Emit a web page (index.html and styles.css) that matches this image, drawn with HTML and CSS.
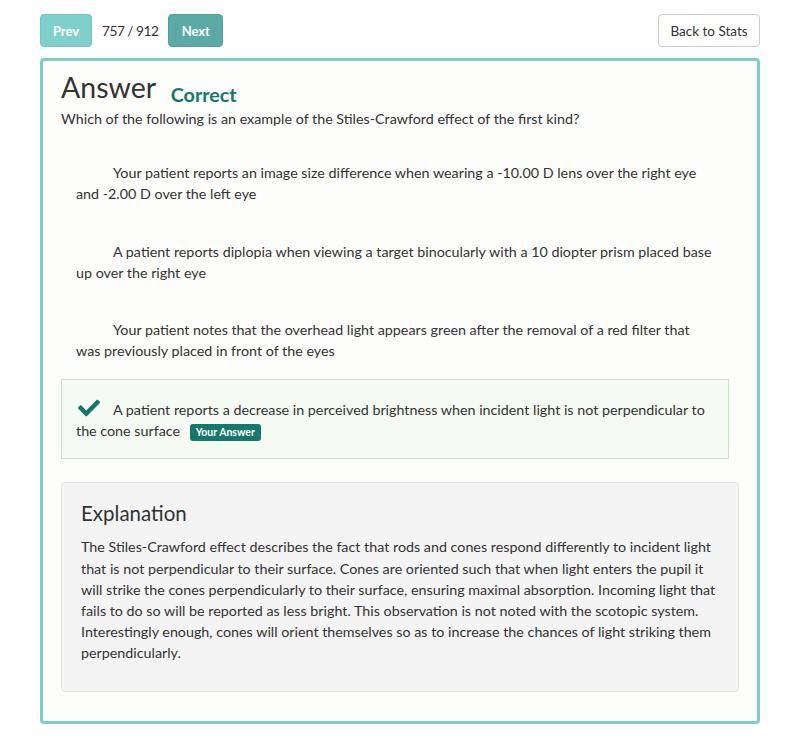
FILE: index.html
```html
<!DOCTYPE html>
<html>
<head>
<meta charset="utf-8">
<link rel="stylesheet" href="styles.css">
</head>
<body>
<div class="page">
  <div class="toolbar">
    <div class="pager">
      <button class="btn btn-prev">Prev</button>
      <span class="count">757 / 912</span>
      <button class="btn btn-next">Next</button>
    </div>
    <button class="btn-back">Back to Stats</button>
  </div>
  <div class="card">
    <h1 class="title">Answer <span class="status">Correct</span></h1>
    <p class="question">Which of the following is an example of the Stiles-Crawford effect of the first kind?</p>
    <ul class="options">
      <li class="option"><span class="mark"></span>Your patient reports an image size difference when wearing a -10.00 D lens over the right eye and -2.00 D over the left eye</li>
      <li class="option"><span class="mark"></span>A patient reports diplopia when viewing a target binocularly with a 10 diopter prism placed base up over the right eye</li>
      <li class="option"><span class="mark"></span>Your patient notes that the overhead light appears green after the removal of a red filter that was previously placed in front of the eyes</li>
      <li class="option selected"><span class="mark"><svg viewBox="0 0 512 512" width="22" height="22"><path fill="#17776a" d="M173.9 439.4l-166.4-166.4c-10-10-10-26.2 0-36.2l36.2-36.2c10-10 26.2-10 36.2 0L192 312.7 432.1 72.6c10-10 26.2-10 36.2 0l36.2 36.2c10 10 10 26.2 0 36.2l-294.4 294.4c-10 10-26.2 10-36.2 0z"/></svg></span><span class="opt-text">A patient reports a decrease in perceived brightness when incident light is not perpendicular to the cone surface</span> <span class="badge">Your Answer</span></li>
    </ul>
    <div class="explanation">
      <h2 class="exp-title">Explanation</h2>
      <p class="exp-text">The Stiles-Crawford effect describes the fact that rods and cones respond differently to incident light that is not perpendicular to their surface. Cones are oriented such that when light enters the pupil it will strike the cones perpendicularly to their surface, ensuring maximal absorption. Incoming light that fails to do so will be reported as less bright. This observation is not noted with the scotopic system. Interestingly enough, cones will orient themselves so as to increase the chances of light striking them perpendicularly.</p>
    </div>
  </div>
</div>
</body>
</html>
```

FILE: styles.css
```css
* { box-sizing: border-box; }
html, body { margin: 0; padding: 0; background: #ffffff; }
body {
  font-family: Lato, "Open Sans", sans-serif;
  color: #333333;
  font-size: 14.3px;
  line-height: 21px;
}
.page { padding: 14px 40px 0 40px; }
.toolbar {
  display: flex;
  justify-content: space-between;
  align-items: center;
  height: 33px;
}
.pager { display: flex; align-items: center; }
.btn {
  height: 33px;
  border: 1px solid transparent;
  border-radius: 4px;
  color: #ffffff;
  font-family: inherit;
  font-weight: 700;
  font-size: 13px;
  padding: 0;
  cursor: pointer;
}
.btn-prev { background: #7fd0cc; border-color: #74c4c0; width: 52px; }
.btn-next { background: #5baaa6; border-color: #52a09c; width: 55px; }
.count { margin: 0 10px; font-size: 13.7px; letter-spacing: -0.5px; color: #333; }
.btn-back {
  height: 33px;
  width: 102px;
  background: #ffffff;
  border: 1px solid #cccccc;
  border-radius: 4px;
  font-family: inherit;
  font-size: 13.5px;
  color: #333;
  padding: 0;
}
.card {
  margin-top: 11px;
  border: 3px solid #7ecdc9;
  border-radius: 4px;
  background: #fdfdfb;
  padding: 9px 18px 29px 18px;
}
.title {
  margin: 0;
  font-size: 28.5px;
  line-height: 34px;
  height: 34px;
  font-weight: 400;
  color: #333;
}
.status {
  font-size: 19.7px;
  line-height: 1;
  font-weight: 700;
  color: #17776a;
  margin-left: 8px;
  vertical-align: -4px;
}
.question { margin: 4px 0 15px 0; }
.options { list-style: none; margin: 0 10px 23px 0; padding: 0; }
.option {
  border: 1px solid transparent;
  padding: 17px 15px 17px 14px;
  line-height: 21.3px;
}
.mark {
  display: inline-block;
  width: 37px;
  vertical-align: -4px;
}
.mark svg { display: block; margin-left: 2px; }
.option.selected {
  background: #f5faf3;
  border-color: #c9e4c2;
  margin-top: -1px;
}
.badge {
  display: inline-block;
  background: #17776a;
  color: #fff;
  font-size: 10.5px;
  font-weight: 700;
  line-height: 17px;
  padding: 0 6px;
  border-radius: 3px;
  margin-left: 6px;
  vertical-align: middle;
}
.explanation {
  background: #f4f4f4;
  border: 1px solid #e3e3e3;
  border-radius: 4px;
  padding: 16px 19px 27px 19px;
}
.exp-title {
  margin: 0 0 9px 0;
  font-size: 20.5px;
  line-height: 28px;
  font-weight: 400;
}
.exp-text { margin: 0; line-height: 21.2px; }
```
